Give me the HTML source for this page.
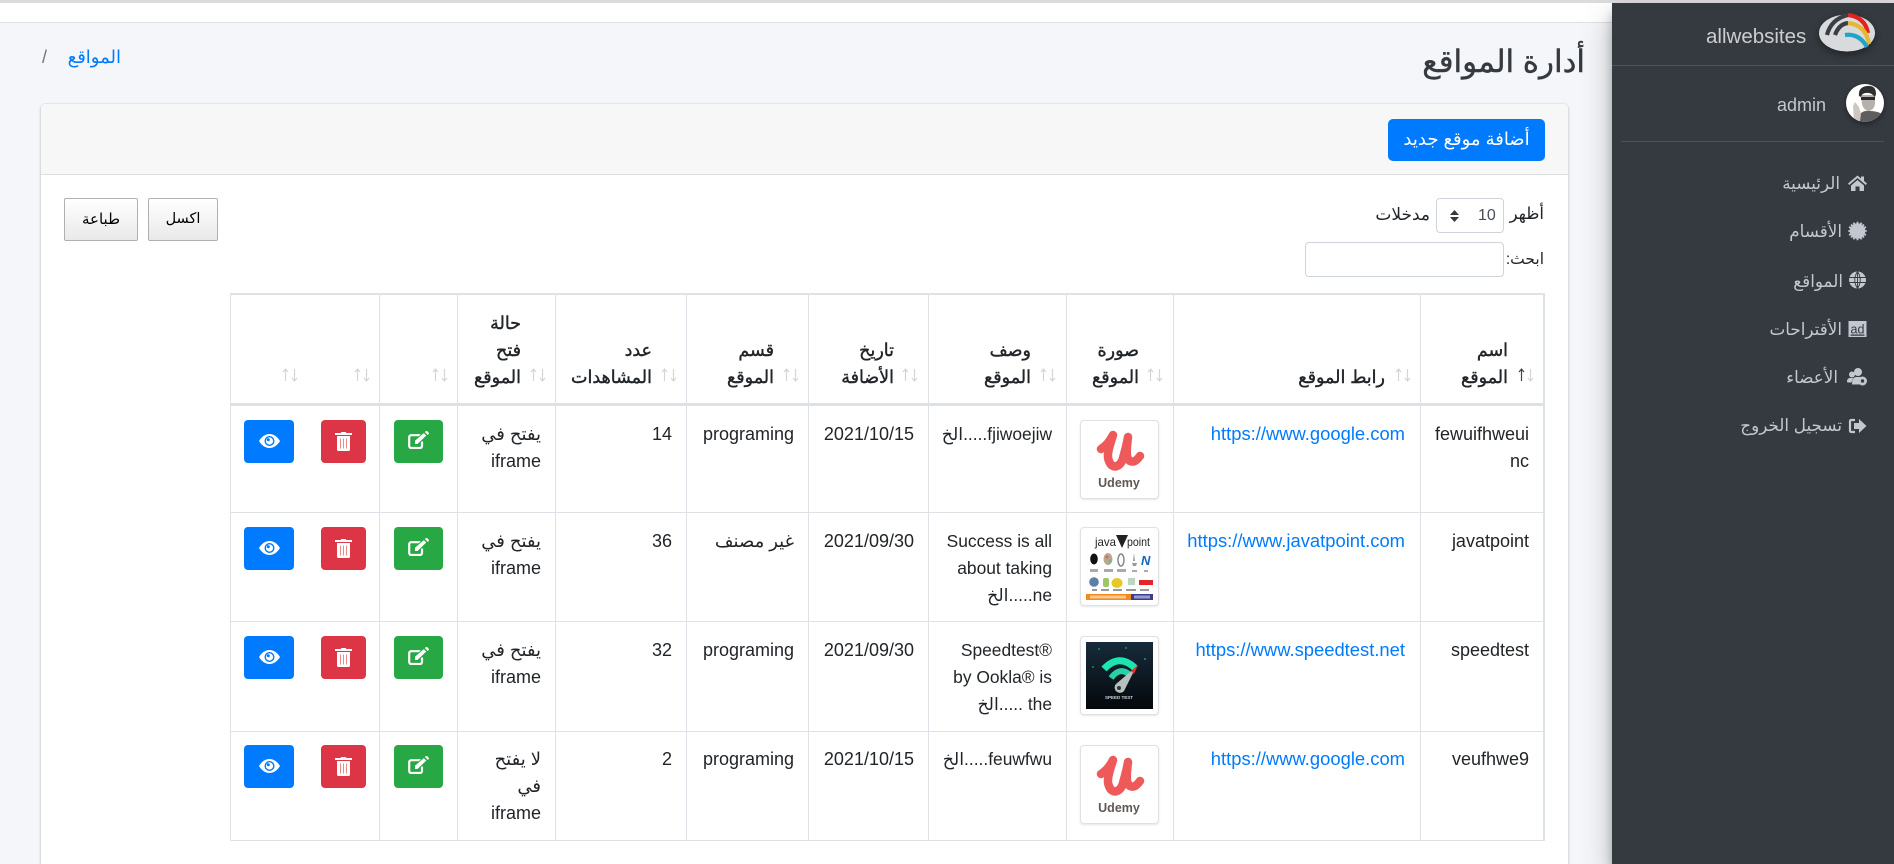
<!DOCTYPE html>
<html lang="ar">
<head>
<meta charset="utf-8">
<title>أدارة المواقع</title>
<style>
html,body{margin:0;padding:0;width:1894px;height:864px;overflow:hidden;background:#f4f6f9}
body{font-family:"Liberation Sans","DejaVu Sans",sans-serif;font-size:18px;color:#212529;position:relative}
.a{position:absolute}
.t{position:absolute;direction:rtl;text-align:right;white-space:nowrap;line-height:27px;font-size:18px}
.h{font-weight:400;font-size:17.5px;-webkit-text-stroke:.4px #212529}
.l{left:0;background:#dee2e6;position:absolute}
.v{width:1px;top:293px;height:548px;background:#dee2e6;position:absolute}
.btn{position:absolute;width:auto;height:43px;border-radius:4px}
.btn svg{position:absolute}
.blue{background:#007bff;left:244px;width:50px}
.red{background:#dc3545;left:321px;width:45px}
.green{background:#28a745;left:394px;width:49px}
.sort{position:absolute;top:368px;width:16px;height:14px}
.thumb{position:absolute;left:1080px;width:77px;height:77px;background:#fff;border:1px solid #dee2e6;border-radius:4px;box-shadow:0 1px 2px rgba(0,0,0,.1)}
.thumb svg{position:absolute;left:5px;top:5px}
.thumb svg.full{left:0;top:0}
.lnk{color:#007bff;font-size:18.4px;line-height:26px}
.n{position:absolute;color:#c2c7d0;direction:rtl;text-align:right;white-space:nowrap;font-size:16.8px;line-height:24px}
.ni{position:absolute;left:1847px;width:20px;height:20px}
.dt{position:absolute;top:198px;height:43px;background:linear-gradient(#fff,#e9e9e9);border:1px solid #b0b0b0;border-radius:2px;box-sizing:border-box;text-align:center;line-height:41px;font-size:15px;color:#000}
</style>
</head>
<body>
<svg width="0" height="0" style="position:absolute">
<defs>
<symbol id="eye" viewBox="0 0 21 14"><path fill="#fff" fill-rule="evenodd" d="M0 7C2.500 2.800 6.200 0 10.500 0S18.500 2.800 21 7c-2.500 4.200-6.200 7-10.500 7S2.500 11.200 0 7zM10.500 2a5 5 0 1 0 0 10a5 5 0 0 0 0-10z"/><circle cx="10.500" cy="7" r="3.600" fill="#fff"/><circle cx="9.300" cy="5.800" r="1.500" fill="#007bff"/></symbol>
<symbol id="trash" viewBox="0 0 17 19"><path fill="#fff" d="M5.500 1 6.500 0h4l1 1H16.500a.5.500 0 0 1 .5.500V3H0V1.500A.5.500 0 0 1 .5 1zM2 4h13V17.500a1.500 1.500 0 0 1-1.500 1.500H3.500A1.500 1.500 0 0 1 2 17.500z"/><path stroke="#e88" stroke-width="1" d="M5.500 6.500v10M8.500 6.500v10M11.500 6.500v10"/></symbol>
<symbol id="edit" viewBox="0 0 21 18"><path fill="none" stroke="#fff" stroke-width="2.200" d="M12.500 4.200H3.200a2 2 0 0 0-2 2V15a2 2 0 0 0 2 2H12a2 2 0 0 0 2-2V10.500"/><path fill="#fff" stroke="#28a745" stroke-width=".9" d="M6.500 9.500 15.800 1.500 19 4.500l-9.300 9H6.500z"/><path fill="#fff" d="M16.800 1 18 .1a1 1 0 0 1 1.200 0L20.700 1.700a1 1 0 0 1 0 1.300L19.800 4z"/></symbol>
<symbol id="s" viewBox="0 0 16 14"><path fill="none" stroke="#d5d5d5" stroke-width="1.200" d="M3.500 13V1.500M1 4l2.500-3L6 4M12.500 1v11.500M10 10l2.500 3 2.500-3"/></symbol>
<symbol id="s2" viewBox="0 0 16 14"><path fill="none" stroke="#444" stroke-width="1.200" d="M3.500 13V1.500M1 4l2.500-3L6 4"/><path fill="none" stroke="#d5d5d5" stroke-width="1.200" d="M12.500 1v11.500M10 10l2.500 3 2.500-3"/></symbol>
<symbol id="u" viewBox="0 0 77 77"><path fill="none" stroke="#ee5a5a" stroke-width="8.500" stroke-linecap="round" stroke-linejoin="round" d="M20 28C25 25 29 20 32 14C29 24 25 34 28 40C31 49 40 46 42 37C44 30 46 23 47 16C46 25 44 37 49 40C53 42 56 39 59 35"/></symbol>
</defs>
</svg>

<!-- top chrome -->
<div class="a" style="left:0;top:0;width:1894px;height:3px;background:#dcdcdc"></div>
<div class="a" style="left:0;top:3px;width:1612px;height:19px;background:#fff"></div>
<div class="a" style="left:0;top:22px;width:1612px;height:1px;background:#dee2e6"></div>

<!-- title & breadcrumb -->
<div class="t" style="right:309px;top:42px;font-size:31px;line-height:40px;color:#343a40;-webkit-text-stroke:.4px #343a40">أدارة المواقع</div>
<div class="t" style="right:1773px;top:44px;font-size:18px;color:#007bff">المواقع</div>
<div class="t" style="left:42px;top:44px;color:#6c757d;font-size:18px;direction:ltr">/</div>

<!-- card -->
<div class="a" style="left:41px;top:104px;width:1527px;height:780px;background:#fff;border-radius:4px;box-shadow:0 0 1px rgba(0,0,0,.2),0 1px 3px rgba(0,0,0,.2)"></div>
<div class="a" style="left:41px;top:104px;width:1527px;height:71px;background:#f7f7f7;border-bottom:1px solid #dfdfdf;box-sizing:border-box;border-radius:4px 4px 0 0"></div>
<div class="a" style="left:1388px;top:119px;width:157px;height:42px;background:#007bff;border-radius:5px;color:#fff;text-align:center;direction:rtl;line-height:41px;font-size:18px">أضافة موقع جديد</div>

<!-- datatable controls -->
<div class="t" style="right:350px;top:201px;font-size:16.5px">أظهر</div>
<div class="a" style="left:1436px;top:198px;width:68px;height:35px;border:1px solid #ced4da;border-radius:4px;box-sizing:border-box;background:#fff"></div>
<div class="a" style="left:1478px;top:202px;font-size:16px;line-height:27px;color:#495057">10</div>
<svg class="a" style="left:1450px;top:210px" width="9" height="12"><path fill="#343a40" d="M4.500 0 9 5H0zM0 7h9l-4.500 5z"/></svg>
<div class="t" style="right:464px;top:201px;font-size:17px">مدخلات</div>
<div class="t" style="right:350px;top:246px;font-size:15.5px">ابحث:</div>
<div class="a" style="left:1305px;top:242px;width:199px;height:35px;border:1px solid #ced4da;border-radius:4px;box-sizing:border-box;background:#fff"></div>
<div class="dt" style="left:64px;width:74px">طباعة</div>
<div class="dt" style="left:148px;width:70px;font-size:14.500px">اكسل</div>

<!-- table lines -->
<div class="l" style="left:230px;top:293px;width:1314px;height:2px"></div>
<div class="l" style="left:230px;top:403px;width:1314px;height:3px"></div>
<div class="l" style="left:230px;top:512px;width:1314px;height:1px"></div>
<div class="l" style="left:230px;top:621px;width:1314px;height:1px"></div>
<div class="l" style="left:230px;top:731px;width:1314px;height:1px"></div>
<div class="l" style="left:230px;top:840px;width:1314px;height:1px"></div>
<div class="v" style="left:230px"></div>
<div class="v" style="left:379px"></div>
<div class="v" style="left:457px"></div>
<div class="v" style="left:555px"></div>
<div class="v" style="left:686px"></div>
<div class="v" style="left:808px"></div>
<div class="v" style="left:928px"></div>
<div class="v" style="left:1066px"></div>
<div class="v" style="left:1173px"></div>
<div class="v" style="left:1420px"></div>
<div class="v" style="left:1543px;width:2px"></div>

<!-- header -->
<div class="t h" style="right:386px;top:337px;">اسم<br>الموقع</div>
<div class="t h" style="right:509px;top:364px">رابط الموقع</div>
<div class="t h" style="right:755px;top:337px">صورة<br>الموقع</div>
<div class="t h" style="right:863px;top:337px">وصف<br>الموقع</div>
<div class="t h" style="right:1000px;top:337px">تاريخ<br>الأضافة</div>
<div class="t h" style="right:1120px;top:337px">قسم<br>الموقع</div>
<div class="t h" style="right:1242px;top:337px">عدد<br>المشاهدات</div>
<div class="t h" style="right:1373px;top:310px">حالة<br>فتح<br>الموقع</div>
<svg class="sort" style="left:1518px"><use href="#s2"/></svg>
<svg class="sort" style="left:1395px"><use href="#s"/></svg>
<svg class="sort" style="left:1147px"><use href="#s"/></svg>
<svg class="sort" style="left:1040px"><use href="#s"/></svg>
<svg class="sort" style="left:902px"><use href="#s"/></svg>
<svg class="sort" style="left:783px"><use href="#s"/></svg>
<svg class="sort" style="left:661px"><use href="#s"/></svg>
<svg class="sort" style="left:530px"><use href="#s"/></svg>
<svg class="sort" style="left:432px"><use href="#s"/></svg>
<svg class="sort" style="left:354px"><use href="#s"/></svg>
<svg class="sort" style="left:282px"><use href="#s"/></svg>

<!-- row 1 -->
<div class="t" style="right:365px;top:421px">fewuifhweui<br>nc</div>
<div class="t lnk" style="right:489px;top:421px">https://www.google.com</div>
<div class="t" style="right:842px;top:421px;font-size:17.4px">fjiwoejiw.....الخ</div>
<div class="t" style="right:980px;top:421px">2021/10/15</div>
<div class="t" style="right:1100px;top:421px">programing</div>
<div class="t" style="right:1222px;top:421px">14</div>
<div class="t" style="right:1353px;top:421px">يفتح في<br>iframe</div>
<div class="thumb" style="top:420px"><svg class="full" width="77" height="77" viewBox="0 0 77 77"><use href="#u" width="77" height="77"/><text x="38" y="66" text-anchor="middle" font-family="Liberation Sans" font-weight="700" font-size="12.500" fill="#5f5855">Udemy</text></svg></div>
<div class="btn green" style="top:420px"><svg style="left:14px;top:11px" width="21" height="18"><use href="#edit"/></svg></div>
<div class="btn red" style="top:420px"><svg style="left:14px;top:12px" width="17" height="19"><use href="#trash"/></svg></div>
<div class="btn blue" style="top:420px"><svg style="left:15px;top:14px" width="21" height="14"><use href="#eye"/></svg></div>

<!-- row 2 -->
<div class="t" style="right:365px;top:528px">javatpoint</div>
<div class="t lnk" style="right:489px;top:528px">https://www.javatpoint.com</div>
<div class="t" style="right:842px;top:528px;font-size:17.4px">Success is all<br>about taking<br>ne.....الخ</div>
<div class="t" style="right:980px;top:528px">2021/09/30</div>
<div class="t" style="right:1100px;top:528px">غير مصنف</div>
<div class="t" style="right:1222px;top:528px">36</div>
<div class="t" style="right:1353px;top:528px">يفتح في<br>iframe</div>
<div class="thumb" style="top:527px"><svg width="67" height="67" viewBox="0 0 67 67">
<rect width="67" height="67" fill="#fff"/>
<text x="9" y="13" font-family="Liberation Sans" font-size="12" textLength="21" lengthAdjust="spacingAndGlyphs" fill="#222">java</text>
<path d="M30 2h12l-6 13z" fill="#222"/>
<text x="41" y="13" font-family="Liberation Sans" font-size="12" textLength="23" lengthAdjust="spacingAndGlyphs" fill="#222">point</text>
<ellipse cx="8" cy="26" rx="3.800" ry="5.500" fill="#111"/>
<ellipse cx="22" cy="26" rx="4.500" ry="6" fill="#b8a890"/>
<circle cx="21" cy="24" r="1.500" fill="#d66"/><circle cx="24" cy="28" r="1.500" fill="#6b8"/>
<ellipse cx="35" cy="27" rx="3" ry="6" fill="none" stroke="#888" stroke-width="1.500"/>
<path d="M46 30h5l-1 3h-3zM48 20l1 8h-2z" fill="#999"/>
<text x="55" y="32" font-family="Liberation Sans" font-weight="700" font-style="italic" font-size="13" fill="#1565c0">N</text>
<rect x="4" y="36" width="8" height="3" fill="#aaa"/><rect x="18" y="36" width="9" height="3" fill="#aaa"/><rect x="31" y="36" width="9" height="3" fill="#aaa"/><rect x="46" y="37" width="5" height="2" fill="#aaa"/><rect x="58" y="37" width="4" height="2" fill="#aaa"/>
<circle cx="8" cy="49" r="4.800" fill="#5f7fa8"/>
<rect x="17" y="45" width="6" height="9" rx="2" fill="#9cc66a"/>
<ellipse cx="31" cy="50" rx="5.500" ry="5" fill="#e6c826"/>
<rect x="42" y="45" width="7" height="7" fill="#bcd6c0"/>
<rect x="53" y="47" width="14" height="5" fill="#e3242b"/>
<rect x="6" y="56" width="5" height="2" fill="#999"/><rect x="15" y="56" width="8" height="2" fill="#999"/><rect x="27" y="56" width="9" height="2" fill="#999"/><rect x="40" y="56" width="10" height="2" fill="#999"/><rect x="54" y="56" width="9" height="2" fill="#999"/>
<rect x="0" y="61" width="45" height="6" fill="#f28a1e"/><rect x="45" y="61" width="22" height="6" fill="#3c3f8f"/>
<rect x="4" y="62.500" width="36" height="3" fill="#f8c68e"/><rect x="48" y="62.500" width="16" height="3" fill="#9a9cd0"/>
</svg></div>
<div class="btn green" style="top:527px"><svg style="left:14px;top:11px" width="21" height="18"><use href="#edit"/></svg></div>
<div class="btn red" style="top:527px"><svg style="left:14px;top:12px" width="17" height="19"><use href="#trash"/></svg></div>
<div class="btn blue" style="top:527px"><svg style="left:15px;top:14px" width="21" height="14"><use href="#eye"/></svg></div>

<!-- row 3 -->
<div class="t" style="right:365px;top:637px">speedtest</div>
<div class="t lnk" style="right:489px;top:637px">https://www.speedtest.net</div>
<div class="t" style="right:842px;top:637px;font-size:17.4px">Speedtest®&lrm;<br>by Ookla® is<br>the .....الخ</div>
<div class="t" style="right:980px;top:637px">2021/09/30</div>
<div class="t" style="right:1100px;top:637px">programing</div>
<div class="t" style="right:1222px;top:637px">32</div>
<div class="t" style="right:1353px;top:637px">يفتح في<br>iframe</div>
<div class="thumb" style="top:636px"><svg width="67" height="67" viewBox="0 0 67 67">
<defs><linearGradient id="g" x1="0" y1="0" x2="0" y2="1"><stop offset="0" stop-color="#172b3a"/><stop offset="1" stop-color="#04080c"/></linearGradient></defs>
<rect width="67" height="67" fill="url(#g)"/>
<path d="M18 27Q33 11 49 26" fill="none" stroke="#1ce5b0" stroke-width="7"/>
<path d="M25 36Q34 24 44 33" fill="none" stroke="#2ad0a4" stroke-width="6"/>
<path d="M30 42 50 25 38 49a4.500 4.500 0 0 1-8-7z" fill="#b8c0bd"/>
<path d="M45 29 52 23 48 32z" fill="#d8392b"/>
<circle cx="33" cy="46" r="2" fill="#333"/>
<text x="33" y="57" text-anchor="middle" font-family="Liberation Sans" font-weight="700" font-size="4.500" fill="#cfd6d6">SPEED TEST</text>
<circle cx="7" cy="25" r=".7" fill="#1ce5b0"/><circle cx="13" cy="7" r=".7" fill="#1ce5b0"/><circle cx="40" cy="6" r=".7" fill="#1ce5b0"/><circle cx="59" cy="17" r=".8" fill="#1ce5b0"/>
</svg></div>
<div class="btn green" style="top:636px"><svg style="left:14px;top:11px" width="21" height="18"><use href="#edit"/></svg></div>
<div class="btn red" style="top:636px"><svg style="left:14px;top:12px" width="17" height="19"><use href="#trash"/></svg></div>
<div class="btn blue" style="top:636px"><svg style="left:15px;top:14px" width="21" height="14"><use href="#eye"/></svg></div>

<!-- row 4 -->
<div class="t" style="right:365px;top:746px">veufhwe9</div>
<div class="t lnk" style="right:489px;top:746px">https://www.google.com</div>
<div class="t" style="right:842px;top:746px;font-size:17.4px">feuwfwu.....الخ</div>
<div class="t" style="right:980px;top:746px">2021/10/15</div>
<div class="t" style="right:1100px;top:746px">programing</div>
<div class="t" style="right:1222px;top:746px">2</div>
<div class="t" style="right:1353px;top:746px">لا يفتح<br>في<br>iframe</div>
<div class="thumb" style="top:745px"><svg class="full" width="77" height="77" viewBox="0 0 77 77"><use href="#u" width="77" height="77"/><text x="38" y="66" text-anchor="middle" font-family="Liberation Sans" font-weight="700" font-size="12.500" fill="#5f5855">Udemy</text></svg></div>
<div class="btn green" style="top:745px"><svg style="left:14px;top:11px" width="21" height="18"><use href="#edit"/></svg></div>
<div class="btn red" style="top:745px"><svg style="left:14px;top:12px" width="17" height="19"><use href="#trash"/></svg></div>
<div class="btn blue" style="top:745px"><svg style="left:15px;top:14px" width="21" height="14"><use href="#eye"/></svg></div>

<!-- sidebar -->
<div class="a" style="left:1612px;top:3px;width:282px;height:861px;background:#343a40;box-shadow:0 14px 28px rgba(0,0,0,.25),0 10px 10px rgba(0,0,0,.22)"></div>
<div class="a" style="left:1612px;top:65px;width:282px;height:1px;background:#4b545c"></div>
<div class="a" style="left:1706px;top:22px;font-size:20.500px;line-height:30px;color:rgba(255,255,255,.75)">allwebsites</div>
<svg class="a" style="left:1819px;top:13px;filter:drop-shadow(0 3px 4px rgba(0,0,0,.4))" width="56" height="39" viewBox="0 0 56 39">
<ellipse cx="28" cy="20" rx="28" ry="18.500" fill="#d9dadc"/>
<g fill="none" stroke-width="4.200">
<path d="M8 22Q12 6 29 2" stroke="#3b3f45"/><path d="M29 2Q46 4 49 20" stroke="#e2231f"/>
<path d="M16 22Q20 11 29 10" stroke="#3b3f45"/><path d="M29 10Q47 12 50 31" stroke="#e4b930"/>
<path d="M26 22Q40 20 48 34" stroke="#21a5c4"/>
</g></svg>
<div class="a" style="left:1777px;top:92px;font-size:18px;line-height:26px;color:#c2c7d0">admin</div>
<svg class="a" style="left:1846px;top:84px;filter:drop-shadow(0 2px 3px rgba(0,0,0,.4))" width="38" height="38" viewBox="0 0 38 38">
<defs><clipPath id="av"><circle cx="19" cy="19" r="19"/></clipPath></defs>
<g clip-path="url(#av)"><rect width="38" height="38" fill="#fff"/>
<path d="M14 38V30Q18 26 24 27Q32 27 38 31V38z" fill="#5e5e5e"/>
<path d="M15 11H29V20Q28 26 23 27Q17 26 16 20z" fill="#b5b0ab"/>
<path d="M13 12Q12 3 21 2Q30 1 30 10L29 13Q25 8 20 9Q16 9 15 13z" fill="#2f2f2f"/>
<path d="M15 13H29V16H15z" fill="#2b2b2b"/>
<path d="M8 37 7 22 9 18 13 23 15 30 14 37z" fill="#cfc7bf"/></g></svg>
<div class="a" style="left:1621px;top:141px;width:263px;height:1px;background:#4b545c"></div>

<svg class="ni" style="top:173px" viewBox="0 0 20 20"><path fill="#c2c7d0" d="M10.500 2.500 1 10.500l1.200 1.500 8.300-7 8.300 7 1.200-1.500-3-2.600V3.500h-3v2zM4 12.500l6.500-5.500 6.500 5.500V18h-4.500v-4.500h-4V18H4z"/></svg>
<svg class="ni" style="top:221px" viewBox="0 0 20 20"><circle cx="10.500" cy="10" r="7.800" fill="#c2c7d0"/><g stroke="#c2c7d0" stroke-width="1.800"><path d="M10.500 .8v18.400M1.300 10h18.400M4 3.500l13 13M17 3.500l-13 13M6.500 1.600l8 16.800M14.500 1.600l-8 16.800M2 6l17 8M19 6 2 14"/></g></svg>
<svg class="ni" style="top:270px" viewBox="0 0 20 20"><circle cx="10.500" cy="10" r="8.500" fill="#c2c7d0"/><path fill="none" stroke="#343a40" stroke-width=".9" d="M2 7.500h17M2 12.500h17M10.500 1.500v17M10.500 1.500Q5 10 10.500 18.500M10.500 1.500Q16 10 10.500 18.500"/></svg>
<svg class="ni" style="top:319px" viewBox="0 0 20 20"><rect x="1.500" y="2" width="18" height="16" fill="#c2c7d0"/><text x="10.500" y="14.500" text-anchor="middle" font-family="Liberation Sans" font-size="12.500" fill="#343a40" text-decoration="underline">ad</text></svg>
<svg class="ni" style="top:367px" viewBox="0 0 20 20"><circle cx="5" cy="7.500" r="3" fill="#c2c7d0"/><circle cx="11" cy="5" r="4" fill="#c2c7d0"/><path fill="#c2c7d0" d="M0 15q0-4 3-4h3L4.500 15.500H1zM5 17.500Q5 10 9 10h5l2 2-4 5.500z"/><circle cx="15.500" cy="14" r="4.500" fill="#c2c7d0"/><circle cx="15.500" cy="14" r="1.700" fill="#343a40"/></svg>
<svg class="ni" style="top:416px" viewBox="0 0 20 20"><path fill="none" stroke="#c2c7d0" stroke-width="2.200" d="M8 4H4.500Q3 4 3 5.500v9Q3 16 4.500 16H8"/><path fill="#c2c7d0" d="M7 7h5V3l7.500 7-7.500 7v-4H7z"/></svg>

<div class="n" style="right:54px;top:172px">الرئيسية</div>
<div class="n" style="right:52px;top:220px">الأقسام</div>
<div class="n" style="right:51px;top:270px">المواقع</div>
<div class="n" style="right:52px;top:318px">الأقتراحات</div>
<div class="n" style="right:56px;top:366px">الأعضاء</div>
<div class="n" style="right:52px;top:414px">تسجيل الخروج</div>
</body>
</html>
